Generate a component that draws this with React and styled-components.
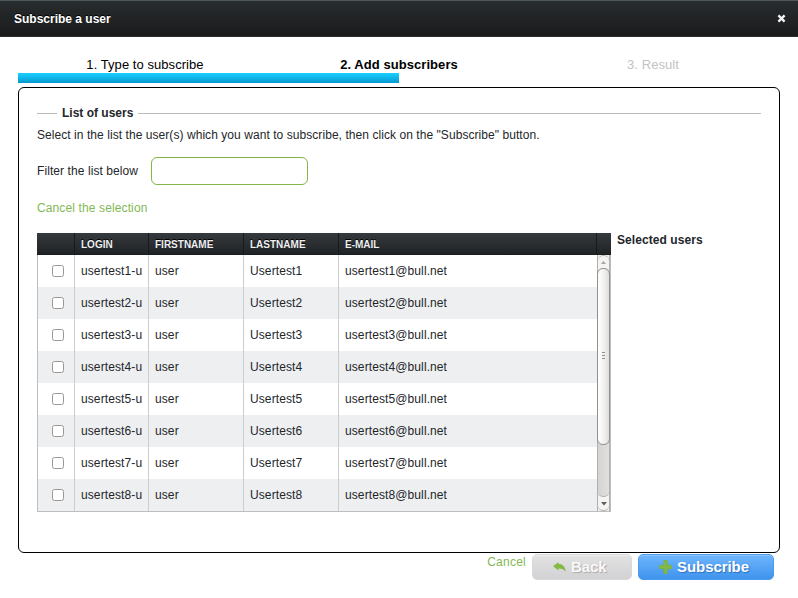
import React from "react";
import styled, { createGlobalStyle } from "styled-components";

const Global = createGlobalStyle`
  * { box-sizing: border-box; }
  body {
    margin: 0;
    background: #fff;
    color: #23262a;
    font: 12px/16px "Liberation Sans", Arial, sans-serif;
    overflow: hidden;
  }
`;

const Dialog = styled.div`
  width: 798px;
  height: 598px;
  display: flex;
  flex-direction: column;
`;

const TitleBar = styled.header`
  height: 37px;
  flex: none;
  display: flex;
  align-items: center;
  justify-content: space-between;
  padding: 0 12px 0 14px;
  border-top: 1px solid #50585b;
  border-bottom: 1px solid #2b2d2e;
  background: linear-gradient(#272c2e, #1b1b1c);
  color: #fff;
  font-weight: bold;
  text-shadow: 0 -1px 0 #000;
`;

const CloseButton = styled.button`
  width: 9px;
  height: 9px;
  padding: 0;
  border: 0;
  background: none;
  display: flex;
  svg { display: block; }
`;

const Steps = styled.ol`
  list-style: none;
  display: grid;
  grid-template-columns: repeat(3, 1fr);
  margin: 20px 18px 0;
  padding: 0;
  height: 16px;
  flex: none;
  font-size: 13px;
  line-height: 16px;
  letter-spacing: 0.06px;
  text-align: center;
`;

const Step = styled.li`
  color: ${(p) => (p.$state === "todo" ? "#c3c3c3" : "#000")};
  font-weight: ${(p) => (p.$state === "current" ? "bold" : "normal")};
`;

const Progress = styled.div`
  width: 381px;
  height: 10px;
  flex: none;
  margin: 0 18px 4px;
  background: linear-gradient(#1cd0ff, #0498d0);
`;

const Panel = styled.section`
  height: 466px;
  flex: none;
  margin: 0 18px;
  padding: 17px 18px 0;
  border: 1px solid #000;
  border-radius: 6px;
`;

const Legend = styled.h2`
  display: flex;
  align-items: center;
  gap: 5px;
  margin: 0;
  font-size: 12px;
  line-height: 16px;
  &::before, &::after {
    content: "";
    height: 1px;
    background: #bbb;
  }
  &::before { width: 20px; }
  &::after { flex: 1; }
`;

const Hint = styled.p`
  margin: 6px 0 14px;
  letter-spacing: 0.06px;
`;

const FilterRow = styled.label`
  display: flex;
  align-items: center;
  gap: 13px;
  height: 28px;
  letter-spacing: 0.08px;
`;

const FilterInput = styled.input`
  width: 157px;
  height: 28px;
  border: 1px solid #83b548;
  border-radius: 6px;
  outline: none;
  background: #fff;
`;

const TextLink = styled.a`
  color: #83b856;
  letter-spacing: 0.12px;
`;

const ClearRow = styled.div`
  margin: 15px 0 17px;
`;

const Lists = styled.div`
  display: flex;
  align-items: flex-start;
  gap: 6px;
`;

const Table = styled.div`
  width: 574px;
`;

const HeadRow = styled.div`
  display: grid;
  grid-template-columns: 38px 74px 95px 95px 258px 14px;
  height: 22px;
  background: linear-gradient(#353a3e, #202325);
  border-bottom: 1px solid #1a1c1e;
`;

const HeadCell = styled.div`
  padding-left: 6px;
  height: 21px;
  border-right: ${(p) => (p.$last ? "0" : "1px solid #17191b")};
  color: #eef0f2;
  font-size: 10px;
  font-weight: bold;
  line-height: 23px;
  text-shadow: 0 -1px 0 #000;
`;

const TableBody = styled.div`
  display: flex;
  height: 257px;
  border: 1px solid #bcbec0;
  border-top: 0;
`;

const Rows = styled.div`
  width: 559px;
`;

const Row = styled.div`
  display: grid;
  grid-template-columns: 37px 74px 95px 95px 258px;
  height: 32px;
  background: ${(p) => (p.$shade ? "#eeeff1" : "#fff")};
`;

const Cell = styled.div`
  padding-left: 6px;
  border-right: ${(p) => (p.$last ? "0" : "1px solid #cbcdcf")};
  line-height: 32px;
  letter-spacing: 0.1px;
  white-space: nowrap;
`;

const CheckCell = styled(Cell)`
  display: flex;
  align-items: center;
  padding-left: 14px;
`;

const Checkbox = styled.input`
  appearance: none;
  width: 12px;
  height: 12px;
  margin: 0;
  border: 1px solid #9b9793;
  border-radius: 2.5px;
  background: #fff;
`;

const Scrollbar = styled.div`
  width: 13px;
  height: 256px;
  display: flex;
  flex-direction: column;
  border: solid #b0afad;
  border-width: 0 1px;
  background: #f1f0ef;
  isolation: isolate;
`;

const ScrollArrow = styled.div`
  height: ${(p) => (p.$down ? "14px" : "13px")};
  flex: none;
  display: flex;
  align-items: center;
  justify-content: center;
  border: 1px solid #b4b3b1;
  border-width: ${(p) => (p.$down ? "0 0 1px" : "1px 0 0")};
  border-radius: ${(p) => (p.$down ? "0 0 6px 6px" : "6px 6px 0 0")};
  background: #f5f4f3;
`;

const Thumb = styled.div`
  height: 177px;
  flex: none;
  width: 13px;
  margin-left: -1px;
  padding-bottom: 2px;
  display: flex;
  flex-direction: column;
  align-items: center;
  justify-content: center;
  gap: 2px;
  border: 1px solid #91908e;
  border-radius: 6px;
  background: linear-gradient(90deg, #fff, #f5f4f3 45%, #dfdedb);
  z-index: 1;
`;

const Grip = styled.i`
  width: 3px;
  height: 1px;
  background: #8e8d8b;
`;

const Trough = styled.div`
  flex: 1;
  margin-top: -7px;
  background: linear-gradient(90deg, #d5d4d2, #e0dfdd);
  border-bottom: 1px solid #b0afad;
  border-radius: 0 0 5px 5px;
`;

const SelectedTitle = styled.h3`
  margin: -1px 0 0;
  font-size: 12px;
  line-height: 16px;
  letter-spacing: 0.07px;
`;

const Footer = styled.footer`
  display: flex;
  justify-content: flex-end;
  align-items: flex-start;
  gap: 6px;
  padding: 1px 24px 0 0;
`;

const Button = styled.button`
  display: flex;
  align-items: center;
  height: 26px;
  width: ${(p) => (p.$primary ? "136px" : "100px")};
  padding: 0 0 0 20px;
  gap: 5px;
  border: 1px solid ${(p) => (p.$primary ? "#4d9bec" : "#d9d8da")};
  border-radius: 5px;
  background: ${(p) =>
    p.$primary ? "linear-gradient(#6fb5fd, #3e94ee)" : "linear-gradient(#e3e2e3, #d2d1d3)"};
  box-shadow: inset 0 1px 0 ${(p) => (p.$primary ? "#8cc5ff" : "#efeeef")};
  color: ${(p) => (p.$primary ? "#fff" : "#f9f9f9")};
  font: bold 15px/24px "Liberation Sans", Arial, sans-serif;
  letter-spacing: -0.06px;
  text-shadow: 1px 1px 1px ${(p) => (p.$primary ? "#2c6fb9" : "#a9a8aa")};
  svg { display: block; flex: none; }
`;

const CancelLink = styled(TextLink)`
  letter-spacing: 0.25px;
`;

const users = Array.from({ length: 8 }, (_, i) => i + 1);
const columns = ["", "LOGIN", "FIRSTNAME", "LASTNAME", "E-MAIL", ""];

export default function App() {
  return (
    <>
      <Global />
      <Dialog>
        <TitleBar>
          <span>Subscribe a user</span>
          <CloseButton aria-label="Close">
            <svg width="9" height="9" viewBox="0 0 9 9">
              <path d="M1.4 1.4l6.2 6.2M7.6 1.4L1.4 7.6" stroke="#f4f4f4" strokeWidth="2.3" />
            </svg>
          </CloseButton>
        </TitleBar>
        <Steps>
          <Step>1. Type to subscribe</Step>
          <Step $state="current">2. Add subscribers</Step>
          <Step $state="todo">3. Result</Step>
        </Steps>
        <Progress />
        <Panel>
          <Legend>List of users</Legend>
          <Hint>
            Select in the list the user(s) which you want to subscribe, then click on the
            "Subscribe" button.
          </Hint>
          <FilterRow>
            Filter the list below
            <FilterInput type="text" />
          </FilterRow>
          <ClearRow>
            <TextLink>Cancel the selection</TextLink>
          </ClearRow>
          <Lists>
            <Table>
              <HeadRow>
                {columns.map((name, i) => (
                  <HeadCell key={i} $last={i === columns.length - 1}>{name}</HeadCell>
                ))}
              </HeadRow>
              <TableBody>
                <Rows>
                  {users.map((n) => (
                    <Row key={n} $shade={n % 2 === 0}>
                      <CheckCell>
                        <Checkbox type="checkbox" />
                      </CheckCell>
                      <Cell>usertest{n}-u</Cell>
                      <Cell>user</Cell>
                      <Cell>Usertest{n}</Cell>
                      <Cell $last>usertest{n}@bull.net</Cell>
                    </Row>
                  ))}
                </Rows>
                <Scrollbar>
                  <ScrollArrow>
                    <svg width="5" height="3" viewBox="0 0 5 3">
                      <path d="M0 3L2.5 0L5 3z" fill="#a5a4a2" />
                    </svg>
                  </ScrollArrow>
                  <Thumb>
                    <Grip />
                    <Grip />
                    <Grip />
                  </Thumb>
                  <Trough />
                  <ScrollArrow $down>
                    <svg width="6" height="4" viewBox="0 0 6 4">
                      <path d="M0 0h6L3 3.5z" fill="#5f5e5c" />
                    </svg>
                  </ScrollArrow>
                </Scrollbar>
              </TableBody>
            </Table>
            <SelectedTitle>Selected users</SelectedTitle>
          </Lists>
        </Panel>
        <Footer>
          <CancelLink>Cancel</CancelLink>
          <Button>
            <svg width="13" height="12" viewBox="0 0 13 12">
              <path d="M0 5.2L5.5 1V3C9.5 3 12.3 5.5 12.7 10.7C11 8 9 7.4 5.5 7.4V9.5z" fill="#83b944" />
            </svg>
            Back
          </Button>
          <Button $primary>
            <svg width="13" height="14" viewBox="0 0 13 14">
              <path
                d="M4.9 .5h3.2v4.8h4.4v3.4H8.1v4.8H4.9V8.700H.5V5.300h4.400z"
                fill="#83b944"
                stroke="#78b14b"
                strokeWidth="1"
                strokeLinejoin="round"
              />
            </svg>
            Subscribe
          </Button>
        </Footer>
      </Dialog>
    </>
  );
}
